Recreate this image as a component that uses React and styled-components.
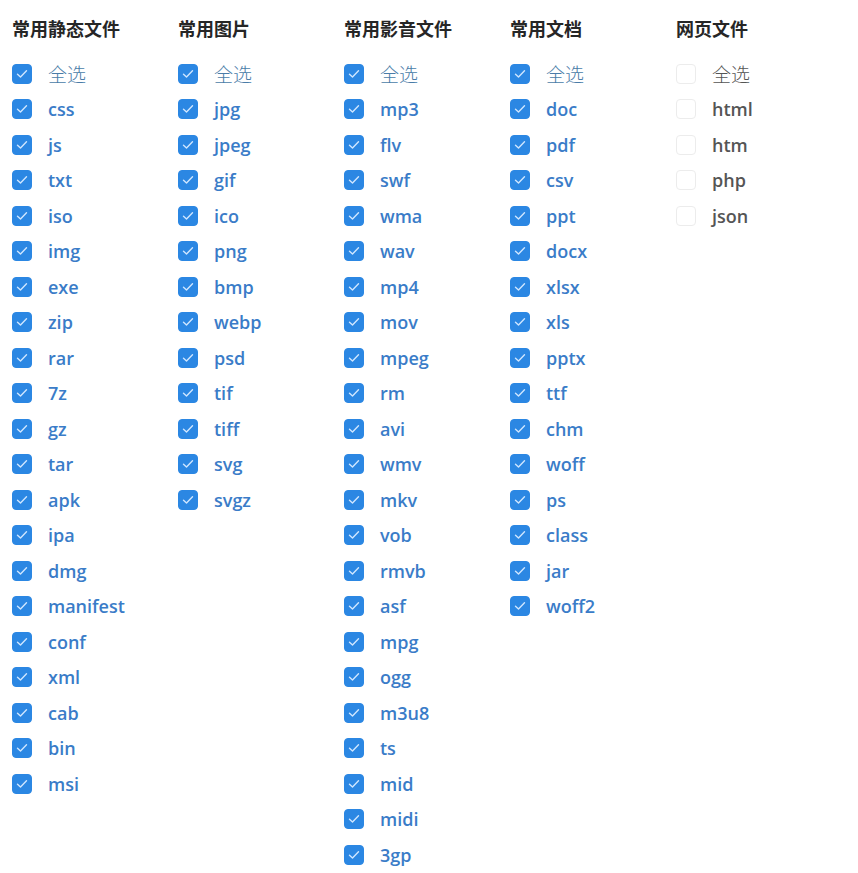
import React from "react";
import styled, { createGlobalStyle } from "styled-components";

const Global = createGlobalStyle`
  html, body { margin: 0; padding: 0; background: #fff; }
  body { font-family: "Open Sans", "Noto Sans CJK SC", sans-serif; }
`;

const groups = [
  { title: "常用静态文件", checked: true, items: ["css","js","txt","iso","img","exe","zip","rar","7z","gz","tar","apk","ipa","dmg","manifest","conf","xml","cab","bin","msi"] },
  { title: "常用图片", checked: true, items: ["jpg","jpeg","gif","ico","png","bmp","webp","psd","tif","tiff","svg","svgz"] },
  { title: "常用影音文件", checked: true, items: ["mp3","flv","swf","wma","wav","mp4","mov","mpeg","rm","avi","wmv","mkv","vob","rmvb","asf","mpg","ogg","m3u8","ts","mid","midi","3gp"] },
  { title: "常用文档", checked: true, items: ["doc","pdf","csv","ppt","docx","xlsx","xls","pptx","ttf","chm","woff","ps","class","jar","woff2"] },
  { title: "网页文件", checked: false, items: ["html","htm","php","json"] },
];

const Page = styled.div`
  display: flex;
  padding: 0 0 0 12px;
`;

const Column = styled.section`
  width: 166px;
  flex: none;
  display: flex;
  flex-direction: column;
`;

const Heading = styled.h3`
  margin: 0;
  height: 56px;
  padding-top: 16px;
  box-sizing: border-box;
  font-family: "Noto Sans CJK SC", sans-serif;
  font-size: 18px;
  font-weight: 700;
  color: #262626;
  line-height: 24px;
`;

const Row = styled.label`
  display: flex;
  align-items: center;
  gap: 16px;
  height: 35.5px;
  cursor: pointer;
`;

const Box = styled.span`
  width: 20px;
  height: 20px;
  box-sizing: border-box;
  border-radius: 4px;
  flex: none;
  display: flex;
  align-items: center;
  justify-content: center;
  background: ${p => (p.$checked ? "#2b87e3" : "#fff")};
  border: 1px solid ${p => (p.$checked ? "#2b87e3" : "#ececec")};
`;

const Label = styled.span`
  font-size: ${p => (p.$all ? "19px" : "18px")};
  line-height: 24px;
  font-weight: ${p => (p.$all ? 300 : 600)};
  font-family: ${p => (p.$all ? '"Noto Sans CJK SC", sans-serif' : '"Open Sans", "Noto Sans CJK SC", sans-serif')};
  color: ${p => (p.$all ? (p.$checked ? "#4a7ca8" : "#555") : p.$checked ? "#3a7cc8" : "#555")};
`;

const Check = () => (
  <svg width="12" height="10" viewBox="0 0 12 10" fill="none">
    <path d="M1.5 5.2 L4.5 8 L10.5 1.8" stroke="#cfe6ff" strokeWidth="1.4" strokeLinecap="round" strokeLinejoin="round" />
  </svg>
);

const Item = ({ text, checked, all }) => (
  <Row>
    <Box $checked={checked}>{checked && <Check />}</Box>
    <Label $checked={checked} $all={all}>{text}</Label>
  </Row>
);

export default function App() {
  return (
    <>
      <Global />
      <Page>
        {groups.map(g => (
          <Column key={g.title}>
            <Heading>{g.title}</Heading>
            <Item text="全选" checked={g.checked} all />
            {g.items.map(i => (
              <Item key={i} text={i} checked={g.checked} />
            ))}
          </Column>
        ))}
      </Page>
    </>
  );
}
